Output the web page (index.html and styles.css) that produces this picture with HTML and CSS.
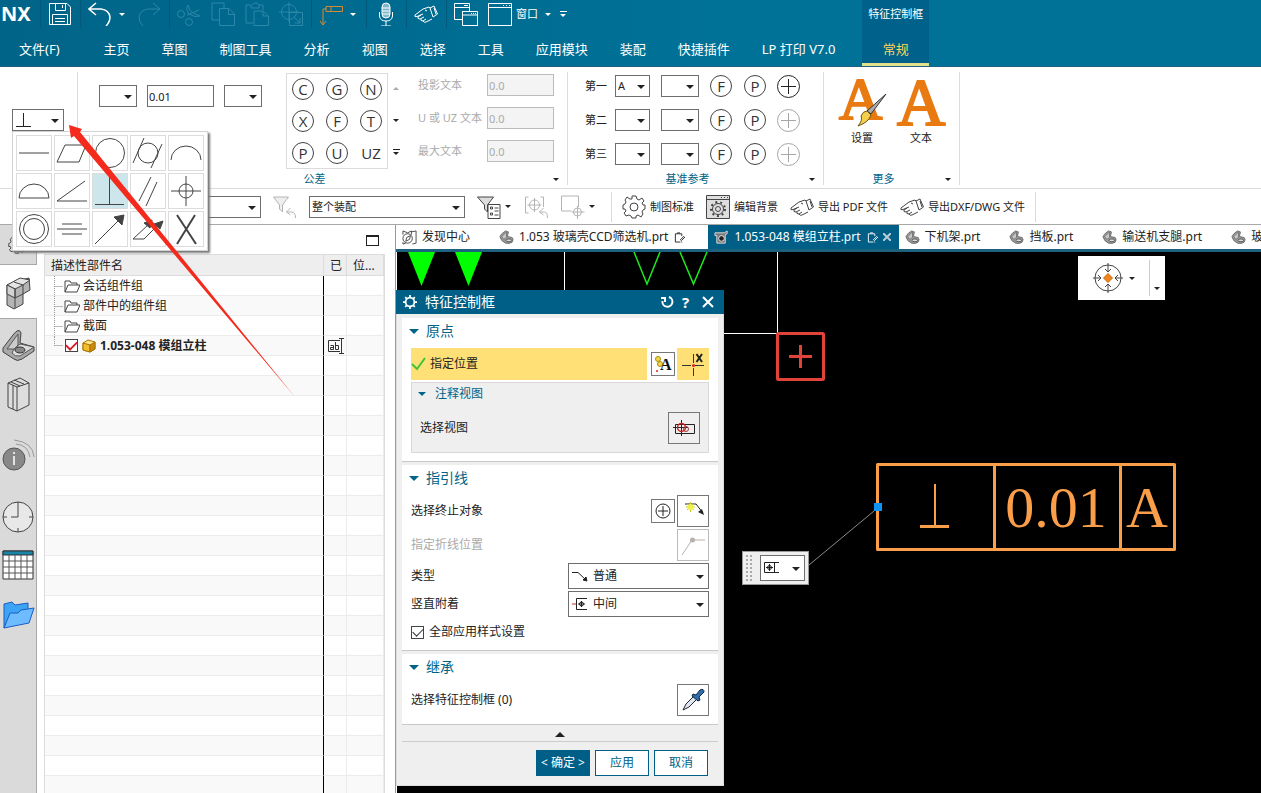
FILE: index.html
```html
<!DOCTYPE html>
<html lang="zh-CN">
<head>
<meta charset="utf-8">
<title>NX - 特征控制框</title>
<link rel="stylesheet" href="styles.css">
</head>
<body>
<svg class="defs" aria-hidden="true">
  <symbol id="hand" viewBox="0 0 24 24"><path d="M15 5 L9 7 L1 13 Q0 15.500 3 14.500 L9 12 M7 13 L4 15 Q3 17 6 17 L10 15 M7 17 Q6 19 9 19 L12 17 M9 19 Q10 21 12 20 L18 17 M11 8 L13 9 M15 5 L16 6 M16 6 L20 4 L23.500 12 L19 15 Z M20 6 L22 12"/></symbol>
  <symbol id="part" viewBox="0 0 16 16"><path fill="#9a9a9a" stroke="#6c6c6c" d="M1 7 Q3 3 7 1 L10 2 L9 7 L14 8 Q16 10 14 13 Q11 15 7 14 Q2 12 1 7 Z"/><path fill="#c8c8c8" stroke="#777" d="M3 7 L8 2 L8 8 L5 10 Z"/><ellipse cx="10.500" cy="11" rx="3" ry="1.500" fill="#ddd" stroke="#555"/></symbol>
  <symbol id="folder" viewBox="0 0 16 14"><path fill="#fff" stroke="#444" d="M1 13 V2 H6 L7 4 H13 V6 M1 13 L4 6 H16 L13 13 Z"/></symbol>
  <symbol id="note" viewBox="0 0 12 12"><path d="M7 11.500 H1.500 V2.500 H8.500 V5 M3.500 1.500 H6.500 M11 5 L7 9 L8 10 L12 6 M8 11.500 H9"/></symbol>
  <symbol id="gear" viewBox="0 0 24 24"><circle cx="12" cy="12" r="4"/><path d="M10 1 H14 L15 4 L17 5 L20 3 L22 6 L20 8 L21 10 L23 10 V14 L21 15 L20 17 L21 19 L19 22 L16 20 L14 21 L14 23 H10 L9 21 L7 20 L4 21 L2 18 L4 16 L3 14 L1 14 V10 L3 9 L4 7 L3 5 L5 2 L8 4 L10 4 Z"/></symbol>
</svg>

<header class="header">
  <div class="header-main">
    <div class="quick">
      <span class="brand">NX</span>
      <div class="qgroup"><button aria-label="保存"><svg viewBox="0 0 24 24"><path d="M1.500 1.500 H19 L22.500 5 V22.500 H1.500 Z M7.500 2 V8.500 H17.500 V2 M14.500 3 V6 M4.500 22 V12.500 H19.500 V22 M7 16.500 H17 M7 19.500 H17"/></svg></button></div>
      <div class="qgroup"><button aria-label="撤消"><svg viewBox="0 0 24 24"><path stroke-width="1.500" d="M8 1 L1 7 L8 13 M2 7 H13 Q21 8 22 15 Q22 20 18 24"/></svg></button><button class="caret" aria-label="撤消列表"></button><button class="dim" aria-label="重做"><svg viewBox="0 0 24 24"><path d="M16 1 L23 7 L16 13 M22 7 H11 Q3 8 2 15 Q2 20 6 24"/></svg></button></div>
      <div class="qgroup dim">
        <button aria-label="剪切"><svg viewBox="0 0 24 24"><path d="M22 8 L10 13 M11 3 Q12 9 16 11 L23 14 Q18 16 12 12 Q8 6 11 3"/><circle cx="4" cy="12" r="3.500"/><circle cx="12" cy="20" r="3.500"/></svg></button>
        <button aria-label="复制"><svg viewBox="0 0 24 24"><path d="M8 18 H1 V1 H13 V6 M8.500 6.500 H18 L23.500 12 V23.500 H8.500 Z M17.500 7 V12.500 H23"/></svg></button>
        <button aria-label="粘贴"><svg viewBox="0 0 24 24"><path d="M8 21 H1 V3 H6 V6 H14 V3 H18 V8 M7 3 L9 1 H12 L14 3 M9 9 H18 L23.500 14 V23.500 H9 Z M18 9 V14 H23"/></svg></button>
        <button aria-label="定位"><svg viewBox="0 0 24 24"><circle cx="10" cy="10" r="7.500"/><path d="M0 10 H20 M10 0 V20 M10.500 10.500 H23.500 V23.500 H10.500 Z M15 15 L21 21 M21 16 V21 H16"/></svg></button>
      </div>
      <div class="qgroup"><button class="orange" aria-label="注释"><svg viewBox="0 0 24 24"><path d="M7 4.500 H23.500 V9.500 H7 Z M12 5 V9 M7 7 H4 V23 M1 19 L4 23 L7 19"/></svg></button><button class="caret" aria-label="注释列表"></button></div>
      <div class="qgroup"><button aria-label="语音"><svg viewBox="0 0 24 24"><rect x="8" y="1" width="8" height="15" rx="4" fill="#7fb6ca"/><path d="M8 6 H16 M8 9 H16 M8 12 H16 M5.500 10 V14 Q6 19 12 19 Q18 19 18.500 14 V10 M12 19 V24 M7 24 H17"/></svg></button></div>
      <div class="qgroup"><button aria-label="触控"><svg><use href="#hand"/></svg></button></div>
      <div class="qgroup"><button aria-label="切换窗口"><svg viewBox="0 0 24 24"><path d="M8 17.500 H.5 V1.500 H15.500 V9 M.5 5.500 H15.500 M8.500 9.500 H23.500 V24 M8.500 9 V23.500 H23.500 M8.500 13 H23 M10 3.500 H14" /><path stroke-dasharray="1 1" d="M17 11.500 H23"/></svg></button><button class="labelled" aria-label="窗口"><svg viewBox="0 0 24 24"><path d="M.5 1.500 H23.500 V23.500 H.5 Z M.5 5.500 H23.500"/><path stroke-dasharray="1 2" d="M15 3.500 H23"/></svg>窗口</button><button class="caret" aria-label="窗口列表"></button><button class="caret bar" aria-label="自定义"></button></div>
    </div>
    <nav class="menu">
      <a href="#" class="file">文件(F)</a><a href="#">主页</a><a href="#">草图</a><a href="#">制图工具</a><a href="#">分析</a><a href="#">视图</a><a href="#">选择</a><a href="#">工具</a><a href="#">应用模块</a><a href="#">装配</a><a href="#">快捷插件</a><a href="#">LP 打印 V7.0</a>
    </nav>
  </div>
  <div class="context-tab"><span>特征控制框</span><a href="#">常规</a></div>
</header>

<section class="ribbon">
  <div class="group symbol-group">
    <span class="select symbol-select"><svg viewBox="0 0 16 16"><path d="M7.500 1 V15 M0 14.500 H15"/></svg><select aria-label="特性"><option></option></select></span>
    <div class="palette">
      <button aria-label="直线度"><svg viewBox="0 0 34 34"><path d="M2 17 H32"/></svg></button>
      <button aria-label="平面度"><svg viewBox="0 0 34 34"><path d="M2 26 L10 9 H31 L24 26 Z"/></svg></button>
      <button aria-label="圆度"><svg viewBox="0 0 34 34"><circle cx="17" cy="17" r="14.500"/></svg></button>
      <button aria-label="圆柱度"><svg viewBox="0 0 34 34"><circle cx="17" cy="17" r="10"/><path d="M2 27 L13 2 M20 32 L31 8"/></svg></button>
      <button aria-label="线轮廓度"><svg viewBox="0 0 34 34"><path d="M2 24 A15 14 0 0 1 32 24"/></svg></button>
      <button aria-label="面轮廓度"><svg viewBox="0 0 34 34"><path d="M2 24 A15 14 0 0 1 32 24 Z"/></svg></button>
      <button aria-label="倾斜度"><svg viewBox="0 0 34 34"><path d="M30 7 L2 27 H32"/></svg></button>
      <button class="active" aria-label="垂直度"><svg viewBox="0 0 34 34"><path d="M16.500 3 V31 M2 30.500 H31"/></svg></button>
      <button aria-label="平行度"><svg viewBox="0 0 34 34"><path d="M8 27 L20 3 M15 32 L26 8"/></svg></button>
      <button aria-label="位置度"><svg viewBox="0 0 34 34"><circle cx="17" cy="17" r="7"/><path d="M2 17 H32 M17 2 V32"/></svg></button>
      <button aria-label="同轴度"><svg viewBox="0 0 34 34"><circle cx="17" cy="17" r="14.500"/><circle cx="17" cy="17" r="10.500"/></svg></button>
      <button aria-label="对称度"><svg viewBox="0 0 34 34"><path d="M7 12 H27 M2 17 H32 M7 22 H27"/></svg></button>
      <button aria-label="圆跳动"><svg viewBox="0 0 34 34"><path d="M2 32 L26 8"/><path fill="#444" d="M31 3 L29 13 L21 5 Z"/></svg></button>
      <button aria-label="全跳动"><svg viewBox="0 0 34 34"><path d="M18 12 L2 27 H13 L27 13"/><path fill="#444" d="M21 8 L19 16 L13 11 Z M32 9 L29 17 L23 12 Z"/></svg></button>
      <button aria-label="无"><svg viewBox="0 0 34 34"><path stroke-width="2" d="M8 3 L27 32 M26 3 L8 32"/></svg></button>
    </div>
  </div>
  <div class="group tolerance">
    <div class="group-body">
      <div class="tol-values"><span class="select"><select aria-label="形状"><option></option></select></span><input class="box" aria-label="公差值" value="0.01"><span class="select"><select aria-label="修饰符"><option></option></select></span></div>
      <div class="letters">
        <button>C</button><button>G</button><button>N</button><button>X</button><button>F</button><button>T</button><button>P</button><button>U</button><button class="plain">UZ</button>
      </div>
      <div class="scroller"><button class="caret up" aria-label="向上"></button><button class="caret" aria-label="向下"></button><button class="caret bar" aria-label="更多符号"></button></div>
      <div class="text-fields">
        <label for="t1">投影文本</label><input id="t1" class="box" value="0.0" disabled>
        <label for="t2">U 或 UZ 文本</label><input id="t2" class="box" value="0.0" disabled>
        <label for="t3">最大文本</label><input id="t3" class="box" value="0.0" disabled>
      </div>
    </div>
    <div class="group-title"><span>公差</span><button class="caret" aria-label="公差选项"></button></div>
  </div>
  <div class="group datum">
    <div class="group-body datum-rows">
      <div class="datum-row"><label for="d1">第一</label><span class="select narrow"><select id="d1"><option>A</option></select></span><span class="select"><select aria-label="第一修饰符"><option></option></select></span><button class="ring">F</button><button class="ring">P</button><button class="plus" aria-label="添加第一"></button></div>
      <div class="datum-row"><label for="d2">第二</label><span class="select narrow"><select id="d2"><option></option></select></span><span class="select"><select aria-label="第二修饰符"><option></option></select></span><button class="ring">F</button><button class="ring">P</button><button class="plus" aria-label="添加第二" disabled></button></div>
      <div class="datum-row"><label for="d3">第三</label><span class="select narrow"><select id="d3"><option></option></select></span><span class="select"><select aria-label="第三修饰符"><option></option></select></span><button class="ring">F</button><button class="ring">P</button><button class="plus" aria-label="添加第三" disabled></button></div>
    </div>
    <div class="group-title"><span>基准参考</span><button class="caret" aria-label="基准选项"></button></div>
  </div>
  <div class="group more">
    <div class="group-body big-buttons">
      <button><svg viewBox="0 0 52 54"><text class="big-a" x="3" y="43" font-size="60">A</text><path fill="#aaa" stroke="#333" d="M50 18 L35 38 L31 35 Z"/><path fill="#f4cf4b" stroke="#6b5418" d="M31 35 L35 39 Q33 46 22 50 Q27 44 25 40 Q27 35 31 35"/></svg>设置</button>
      <button><svg viewBox="0 0 52 54"><text class="big-a" x="2" y="49" font-size="67">A</text></svg>文本</button>
    </div>
    <div class="group-title"><span>更多</span><button class="caret" aria-label="更多选项"></button></div>
  </div>
</section>

<section class="toolbar">
  <span class="select filter-select"><select aria-label="选择过滤器"><option></option></select></span>
  <button class="tool faded" aria-label="重置过滤器"><svg viewBox="0 0 24 24"><path fill="#eee" d="M1 2 H16 L10 10 V17 L7 14 V10 Z"/><path d="M18 13 L14 17 L18 20 M14 17 H19 Q23 17 23 23"/></svg></button>
  <span class="select scope-select"><select aria-label="选择范围"><option>整个装配</option></select></span>
  <button class="tool" aria-label="过滤器"><svg viewBox="0 0 24 24"><path fill="#ddd" d="M1 2 H17 L11 10 V17 L8 14 V10 Z"/><path fill="#fff" d="M11.500 9.500 H23.500 V23.500 H11.500 Z M14 12 H16 V14 H14 Z M14 18 H16 V20 H14 Z M18 13 H22 M18 16 H22 M18 20 H22"/></svg></button><button class="caret" aria-label="过滤器列表"></button>
  <button class="tool faded" aria-label="捕捉"><svg viewBox="0 0 24 24"><circle cx="10" cy="10" r="5"/><path d="M4 2 H1 V18 H4 M16 2 H19 V12 M3 10 H17 M10 3 V17 M19 13 L15 17 L19 20 M15 17 H20 Q23 17 23 23"/></svg></button>
  <button class="tool faded" aria-label="框选"><svg viewBox="0 0 24 24"><path d="M1 1 H18 V12 M1 1 V16 H11 M11 17 H24 M17 11 V24"/><circle cx="17" cy="17" r="4"/></svg></button><button class="caret" aria-label="框选列表"></button>
  <div class="toolbar-end">
    <button class="action"><svg><use href="#gear"/></svg>制图标准</button>
    <button class="action"><svg viewBox="0 0 24 24"><path fill="#dedede" d="M.5 .5 H23.500 V23.500 H.5 Z M.5 4.500 H23.500"/><path stroke-dasharray="1 2" d="M15 2.500 H23"/><circle cx="12" cy="14" r="2.500"/><circle cx="12" cy="14" r="5.500"/><circle cx="12" cy="14" r="7" stroke-width="2" stroke-dasharray="2 3"/></svg>编辑背景</button>
    <button class="action"><svg><use href="#hand"/></svg>导出 PDF 文件</button>
    <button class="action"><svg><use href="#hand"/></svg>导出DXF/DWG 文件</button>
  </div>
</section>

<main class="workspace">
  <aside class="resource-bar">
    <button class="settings" aria-label="设置"><svg viewBox="0 0 24 24"><use href="#gear"/></svg></button>
    <button class="current" aria-label="装配导航器"><svg viewBox="0 0 36 36"><path fill="#b4b4b4" stroke="#444" d="M7 11 L17 7 L29 4 L30 16 L23 20 V30 L14 35 L7 31 Z"/><path fill="#e4e4e4" stroke="#444" d="M7 11 L20 4 L30 6 L23 11 L15 15 Z"/><path fill="#d2d2d2" stroke="#444" d="M7 11 L15 15 V24 L7 20 Z"/><path fill="none" stroke="#444" d="M15 15 V34 M15 24 L23 20 V11 M14 8 L23 11"/></svg></button>
    <button aria-label="约束导航器"><svg viewBox="0 0 36 36"><path fill="#a8a8a8" stroke="#444" d="M3 22 L13 9 Q19 1 21 7 L20 17 L34 21 V25 L22 33 Q17 36 14 33 L3 26 Z"/><path fill="#ccc" stroke="#555" d="M7 23 L18 8 L18 19 L14 23 Z"/><path fill="#ddd" stroke="#555" d="M14 23 L20 18 L34 21 L20 30 Q15 31 12 27 Z"/><ellipse cx="20" cy="24" rx="5" ry="3" fill="#888" stroke="#333"/></svg></button>
    <button aria-label="重用库"><svg viewBox="0 0 36 36"><path fill="#ddd" stroke="#444" d="M8 7 L20 2 L29 7 V29 L17 35 L8 31 Z M8 7 L17 11 L29 7 M17 11 V35 M13 9 V33 M11 6 L20 10 M14 4 L24 8"/></svg></button>
    <button class="info" aria-label="信息"><svg viewBox="0 0 36 36"><circle cx="14" cy="20" r="11" fill="#888" stroke="#555"/><path fill="none" stroke="#999" d="M16 5 Q28 6 30 18 M14 1 Q33 3 34 18"/><path stroke="#fff" stroke-width="1.500" d="M14 17 V26 M14 13 V15"/></svg></button>
    <button class="history" aria-label="历史"><svg viewBox="0 0 36 36"><circle cx="18" cy="18" r="15" fill="#e8e8e8" stroke="#444"/><path fill="none" stroke="#444" d="M18 3 V18 H11 M3 18 H7 M29 18 H33 M18 29 V33"/></svg></button>
    <button aria-label="工作表"><svg viewBox="0 0 36 36"><path fill="#fff" stroke="#333" d="M3 4 H33 V32 H3 Z"/><path fill="#1884a8" stroke="#333" d="M3 4 H33 V8 H3 Z"/><path stroke="#555" d="M3 14 H33 M3 20 H33 M3 26 H33 M9 8 V32 M15 8 V32 M21 8 V32 M27 8 V32"/></svg></button>
    <button aria-label="文件夹"><svg viewBox="0 0 36 36"><path fill="#3ba4f4" stroke="#1c5dc4" d="M4 7 L12 5 L15 8 L28 6 V15 L10 18 L4 31 Z"/><path fill="#6cbcff" stroke="#1c5dc4" d="M4 31 L10 16 L18 16 L21 13 L34 11 L29 26 Z"/></svg></button>
  </aside>

  <section class="navigator">
    <div class="nav-head"><button class="maximize" aria-label="最大化"></button></div>
    <table class="tree">
      <colgroup><col><col class="c2"><col class="c3"></colgroup>
      <thead><tr><th>描述性部件名</th><th>已</th><th>位...</th></tr></thead>
      <tbody>
        <tr class="node"><td><span><svg><use href="#folder"/></svg>会话组件组</span></td><td></td><td></td></tr>
        <tr class="node"><td><span><svg><use href="#folder"/></svg>部件中的组件组</span></td><td></td><td></td></tr>
        <tr class="node"><td><span><svg><use href="#folder"/></svg>截面</span></td><td></td><td></td></tr>
        <tr class="node last"><td><span><input id="asm" type="checkbox" class="red-check" checked><svg viewBox="0 0 14 14"><path fill="#ffe48a" stroke="#a87400" d="M1 4 L6 1 L13 3 V10 L8 13 L1 11 Z"/><path fill="#f4bd30" d="M1 4 L8 6 V13 L1 11 Z" stroke="#a87400"/><path fill="#c98a10" stroke="#a87400" d="M8 6 L13 3 V10 L8 13 Z"/></svg><label for="asm">1.053-048 模组立柱</label></span></td><td><svg class="ab" viewBox="0 0 16 16"><path d="M12 2.500 H.5 V13.500 H12 M13.500 1 V15 M11 .5 H16 M11 15.500 H16 M2.500 7.500 H5.500 V11.500 H2.500 V9.500 H5 M7.500 4 V11.500 H10.500 V7.500 H8"/></svg></td><td></td></tr>
        <tr><td></td><td></td><td></td></tr><tr><td></td><td></td><td></td></tr><tr><td></td><td></td><td></td></tr><tr><td></td><td></td><td></td></tr>
        <tr><td></td><td></td><td></td></tr><tr><td></td><td></td><td></td></tr><tr><td></td><td></td><td></td></tr><tr><td></td><td></td><td></td></tr>
        <tr><td></td><td></td><td></td></tr><tr><td></td><td></td><td></td></tr><tr><td></td><td></td><td></td></tr><tr><td></td><td></td><td></td></tr>
        <tr><td></td><td></td><td></td></tr><tr><td></td><td></td><td></td></tr><tr><td></td><td></td><td></td></tr><tr><td></td><td></td><td></td></tr>
        <tr><td></td><td></td><td></td></tr><tr><td></td><td></td><td></td></tr><tr><td></td><td></td><td></td></tr><tr><td></td><td></td><td></td></tr>
        <tr><td></td><td></td><td></td></tr><tr><td></td><td></td><td></td></tr>
      </tbody>
    </table>
  </section>

  <section class="document">
    <nav class="tabs">
      <a href="#"><svg viewBox="0 0 16 16"><circle cx="6" cy="9" r="5" fill="none" stroke="#444"/><path fill="none" stroke="#444" d="M1 5 V1 L6 3 L10 1 V5 M10 2 L15 1 V14 L11 15 M4 12 L5 8 L9 6 L8 10 Z M1 13 V15 L4 14"/></svg>发现中心</a>
      <a href="#"><svg><use href="#part"/></svg>1.053 玻璃壳CCD筛选机.prt<svg class="note"><use href="#note"/></svg></a>
      <a href="#" class="active"><svg viewBox="0 0 16 16"><path fill="#777" stroke="#ddd" d="M1 3 H11 L14 1 V4 L12 5 V14 H3 V6 H1 Z"/><circle cx="8" cy="9" r="3" fill="#222" stroke="#eee"/></svg>1.053-048 模组立柱.prt<svg class="note"><use href="#note"/></svg><svg class="close" viewBox="0 0 8 8"><path d="M0 0 L8 8 M8 0 L0 8"/></svg></a>
      <a href="#"><svg><use href="#part"/></svg>下机架.prt</a>
      <a href="#"><svg><use href="#part"/></svg>挡板.prt</a>
      <a href="#"><svg><use href="#part"/></svg>输送机支腿.prt</a>
      <a href="#"><svg><use href="#part"/></svg>玻</a>
    </nav>
    <div class="canvas">
      <svg class="drawing">
        <g transform="translate(-397 -252)" fill="none">
          <path fill="#0f0" stroke="none" d="M408 252 H435 L421.500 286 Z M455 252 H482 L468.500 286 Z"/>
          <path stroke="#1ee81e" stroke-width="1.500" d="M634 252 L647 284 L660 252 M680 252 L693.500 284 L707 252"/>
          <path stroke="#fff" d="M564.500 252 V290 M777.500 252 V333 M723 333.500 H777"/>
          <rect x="777.500" y="333.500" width="46" height="46" rx="1" stroke="#e04338" stroke-width="3"/>
          <path stroke="#e04338" stroke-width="3" d="M789 356.500 H812 M800.500 345 V368"/>
          <path stroke="#fb9e49" stroke-width="3" stroke-linejoin="round" d="M877.500 464.500 H1174.500 V549.500 H877.500 Z M994.500 464 V549 M1120.500 464 V549 M920 526.500 H949"/>
          <path stroke="#fb9e49" stroke-width="2" d="M935 484 V526"/>
          <text class="cad-text" x="1056" y="527" text-anchor="middle">0.01</text>
          <text class="cad-text" x="1147" y="527" text-anchor="middle">A</text>
          <path stroke="#8d8a80" d="M809 565 L874 511"/>
          <rect x="874" y="503" width="8" height="8" fill="#0b94f5" stroke="none"/>
        </g>
      </svg>

      <div class="view-tools"><button aria-label="定向视图"><svg viewBox="0 0 30 30"><circle cx="15" cy="15" r="13"/><path d="M15 0 V9 M12 6 L15 9 L18 6 M15 30 V21 M12 24 L15 21 L18 24 M0 15 H8 M5 12 L8 15 L5 18 M30 15 H22 M25 12 L22 15 L25 18"/><path fill="#f0851c" stroke="#c86a10" d="M15 10.500 L19.500 15 L15 19.500 L10.500 15 Z"/></svg></button><button class="caret" aria-label="视图列表"></button><span class="view-more"><button class="caret" aria-label="视图选项"></button></span></div>

      <div class="leader-tools"><span class="grip"></span><span class="select"><svg viewBox="0 0 16 16"><path d="M15 2.500 H.5 V12.500 H15 M10.500 3 V12 M2 7.500 H9 M5.500 4 V11"/><circle cx="5.500" cy="7.500" r="2"/></svg><select aria-label="附着"><option></option></select></span></div>

      <form class="dialog" onsubmit="return false">
        <div class="dialog-title"><svg viewBox="0 0 16 16"><circle cx="8" cy="8" r="5"/><path d="M8 0 V3 M8 13 V16 M0 8 H3 M13 8 H16 M2.500 2.500 L4.500 4.500 M11.500 11.500 L13.500 13.500 M13.500 2.500 L11.500 4.500 M4.500 11.500 L2.500 13.500"/></svg><h2>特征控制框</h2><button type="button" aria-label="重置"><svg viewBox="0 0 14 14"><path d="M1 3 H5 V7 M9 2 A5 5 0 1 1 2.500 6"/></svg></button><button type="button" aria-label="帮助">?</button><button type="button" aria-label="关闭"><svg viewBox="0 0 14 14"><path d="M2 2 L12 12 M12 2 L2 12"/></svg></button></div>
        <section class="panel">
          <h3>原点</h3>
          <div class="pick-row">
            <div class="pick"><svg viewBox="0 0 16 16"><path d="M1 8 L6 13 L14 2"/></svg>指定位置</div>
            <button type="button" class="small" aria-label="关联文字"><svg viewBox="0 0 22 22"><circle cx="6" cy="6" r="2.500" fill="#f4d848" stroke="#a98b0c"/><circle cx="8" cy="11" r="2.500" fill="#f4d848" stroke="#a98b0c"/><circle cx="5" cy="18" r="1" fill="#d22"/><text x="8" y="17" class="icon-a">A</text></svg></button>
            <button type="button" class="square hot" aria-label="点构造器"><svg viewBox="0 0 30 30"><path d="M4 16.500 H13 M17 16.500 H26 M15.500 5 V14 M15.500 19 V27" stroke="#333"/><path d="M18.500 5 L24 13 M24 5 L18.500 13" stroke="#222" stroke-width="2"/><circle cx="15.500" cy="16.500" r="1.500" fill="#d22"/></svg></button>
          </div>
          <div class="subpanel">
            <h4>注释视图</h4>
            <div class="row"><span>选择视图</span><button type="button" class="square grey" aria-label="选择视图"><svg viewBox="0 0 30 30"><path fill="none" stroke="#222" d="M6.500 11.500 H25.500 V20.500 H6.500 Z M4 14.500 H19 M12.500 7 V23"/><circle cx="12.500" cy="14.500" r="4" fill="none" stroke="#c22" stroke-width="1.500"/><circle cx="17" cy="16" r="2.500" fill="none" stroke="#a33"/></svg></button></div>
          </div>
        </section>
        <section class="panel leader">
          <h3>指引线</h3>
          <div class="row"><span>选择终止对象</span><button type="button" class="small" aria-label="添加对象"><svg viewBox="0 0 22 22"><path fill="none" stroke="#222" d="M6 11 H16 M11 6 V16"/><circle cx="11" cy="11" r="7" fill="none" stroke="#222"/></svg></button><button type="button" class="square" aria-label="终止对象"><svg viewBox="0 0 30 30"><path fill="none" stroke="#222" d="M7 8 H18 L25 17"/><path fill="#222" d="M26 19 L20 16 L24 13 Z"/><path stroke="#c9c72d" d="M8 11 H17 M12.500 6 V16 M9 8 L16 14 M16 8 L9 14"/><circle cx="12.500" cy="11" r="3" fill="#eef04a"/></svg></button></div>
          <div class="row disabled"><span>指定折线位置</span><button type="button" class="square" disabled aria-label="折线位置"><svg viewBox="0 0 30 30"><path fill="none" stroke="#b8b0ac" d="M4 25 L14 10 H27"/><circle cx="14.500" cy="10" r="2.500" fill="#b8b0ac"/></svg></button></div>
          <div class="row field"><label for="kind">类型</label><span class="select"><svg viewBox="0 0 16 16"><path d="M0 4.500 H6 L14 12"/><path fill="#222" d="M15 13 L11 12 L14 9 Z"/></svg><select id="kind"><option>普通</option></select></span></div>
          <div class="row field"><label for="attach">竖直附着</label><span class="select"><svg viewBox="0 0 16 16"><path stroke="#b33" d="M0 8 H4"/><path d="M15 2.500 H4.500 V13.500 H15 M6 8 H13 M9.500 5 V11"/><circle cx="9.500" cy="8" r="2"/></svg><select id="attach"><option>中间</option></select></span></div>
          <div class="check-row"><input type="checkbox" id="style" checked><label for="style">全部应用样式设置</label></div>
        </section>
        <section class="panel inherit">
          <h3>继承</h3>
          <div class="row"><span>选择特征控制框 (0)</span><button type="button" class="square" aria-label="继承控制框"><svg viewBox="0 0 30 30"><path fill="#dfe6f4" stroke="#222" d="M5 25 L8 19 L16 11 L19 14 L11 22 Z"/><path fill="#2d6db0" stroke="#14263c" d="M15 9 L18 10 L22 5 Q26 3 26 7 L21 12 L22 15 L20 16 L14 11 Z"/></svg></button></div>
        </section>
        <button type="button" class="collapse" aria-label="收起"></button>
        <div class="dialog-actions"><button class="primary">&lt; 确定 &gt;</button><button type="button">应用</button><button type="button">取消</button></div>
      </form>
    </div>
  </section>
</main>

<svg class="callout" viewBox="0 0 300 400" aria-hidden="true"><path fill="#f42a1c" d="M69 125 L82 129 L80 132 L295 397 L74 136 L71 138 Z"/></svg>
</body>
</html>
```
FILE: styles.css
```css
* { box-sizing: border-box; }
body {
  margin: 0;
  height: 100vh;
  display: flex;
  flex-direction: column;
  overflow: hidden;
  background: #fff;
  color: #222;
  font: 12px/16px "Noto Sans", "Noto Sans CJK SC", sans-serif;
}
button, input, select {
  font: inherit;
  color: inherit;
  margin: 0;
  padding: 0;
  border: 0;
  border-radius: 0;
  background: none;
}
a { color: inherit; text-decoration: none; }
svg { display: block; flex: none; fill: none; stroke: currentColor; }
h2, h3, h4 { margin: 0; font-weight: 400; }
.defs { position: absolute; width: 0; height: 0; }

.caret { width: 10px; height: 16px; flex: none; display: flex; flex-direction: column; align-items: center; justify-content: center; gap: 2px; }
.caret::after { content: ""; border: 3px solid transparent; border-top-color: currentColor; border-bottom: 0; }
.caret.bar::before { content: ""; width: 7px; height: 1px; background: currentColor; }
.caret.up::after { border: 3px solid transparent; border-bottom-color: #aaa; border-top: 0; }

.select { position: relative; display: flex; flex: none; width: 38px; height: 22px; }
.select select { appearance: none; width: 100%; height: 100%; padding: 0 0 0 2px; border: 1px solid #6e6e6e; background: #fff; }
.select::after { content: ""; position: absolute; right: 5px; top: 50%; margin-top: -1px; border: 4px solid transparent; border-top-color: #222; border-bottom: 0; pointer-events: none; }
.select svg { position: absolute; left: 4px; top: 50%; width: 16px; height: 16px; margin-top: -8px; pointer-events: none; }
.box { width: 67px; height: 22px; padding: 0 1px; border: 1px solid #6e6e6e; background: #fff; font-size: 11px; }
.box:disabled { border-color: #bcbcbc; background: #f4f4f4; color: #aaa; }

.header { flex: none; display: flex; height: 67px; color: #fff; background: linear-gradient(90deg, #006488, #007298 60%); border-bottom: 1px solid #1e5f80; }
.quick { display: flex; align-items: center; height: 28px; }
.brand { width: 40px; padding-left: 1px; font: 700 20px/28px "Noto Sans", sans-serif; }
.qgroup { display: flex; align-items: center; gap: 10px; height: 28px; padding: 0 8px 0 7px; border-left: 1px solid #00587a; }
.qgroup svg { width: 24px; height: 24px; }
.qgroup .caret { margin-left: -5px; }
.qgroup .labelled { display: flex; align-items: center; gap: 4px; font-size: 11px; }
.qgroup .orange { color: #d98a30; }
.dim { color: #2c87a8; }
.menu { display: flex; height: 42px; align-items: center; font-size: 13px; line-height: 20px; }
.menu a { padding: 0 16px; }
.menu .file { padding: 0 28px 0 19px; }
.context-tab { display: flex; flex-direction: column; align-items: center; margin-left: 11px; padding: 0 6px; background: #00628a; border-bottom: 3px solid #e2e08a; font-size: 11px; }
.context-tab span { line-height: 28px; }
.context-tab a { color: #ffd45e; font-size: 13px; line-height: 42px; }

.ribbon { flex: none; display: flex; height: 122px; padding: 5px 0 3px; border-bottom: 1px solid #dcdcdc; font-size: 11px; }
.group { display: flex; flex-direction: column; justify-content: space-between; border-right: 1px solid #dcdcdc; }
.group-body { display: flex; }
.group-title { display: flex; align-items: center; padding-right: 6px; color: #006487; line-height: 12px; }
.group-title span { flex: 1; text-align: center; }
.group-title .caret { height: 12px; color: #222; }
.symbol-group { position: relative; width: 78px; padding: 37px 0 0 12px; justify-content: flex-start; }
.symbol-select { width: 52px; }
.palette { position: absolute; z-index: 5; left: 12px; top: 59px; display: grid; grid-template-columns: repeat(5, 36px); gap: 2px; padding: 3px; background: #fff; border: 1px solid #d2d2d2; box-shadow: 2px 2px 2px #777; }
.palette button { height: 36px; border: 1px solid #dcdcdc; color: #444; }
.palette .active { background: #cde6ec; }
.tolerance .group-body { padding: 1px 13px 0 21px; }
.tol-values { display: flex; gap: 10px; padding-top: 12px; }
.letters { display: grid; grid-template-columns: repeat(3, 34px); grid-auto-rows: 32px; place-items: center; place-content: center; width: 102px; height: 96px; margin-left: 24px; border: 1px solid #dcdcdc; }
.letters button, .ring { width: 22px; height: 22px; border: 1px solid #444; border-radius: 50%; color: #333; font: 400 15px/20px "Open Sans", sans-serif; }
.letters .plain { border: 0; }
.scroller { display: flex; flex-direction: column; gap: 16px; padding: 7px 0 0 3px; }
.text-fields { display: grid; grid-template-columns: 69px 67px; row-gap: 11px; margin-left: 17px; padding-top: 1px; align-content: start; align-items: center; color: #aaa; white-space: nowrap; }
.datum-rows { flex-direction: column; gap: 12px; padding: 3px 23px 0 17px; }
.datum-row { display: flex; align-items: center; gap: 11px; }
.datum-row label { width: 19px; white-space: nowrap; }
.datum-row .narrow { width: 35px; }
.datum-row .ring { margin-right: 1px; }
.datum-row .ring + .plus { margin-left: -1px; }
.plus { width: 23px; height: 23px; margin: -1px 0; border: 1px solid #222; border-radius: 50%; background: linear-gradient(#222, #222) center / 15px 1px no-repeat, linear-gradient(#222, #222) center / 1px 15px no-repeat; }
.plus:disabled { opacity: 0.4; }
.big-buttons { gap: 7px; padding: 4px 12px 0 12px; }
.big-buttons button { display: flex; flex-direction: column; align-items: center; }
.big-buttons svg { width: 52px; height: 54px; }
.big-a { font-family: "Liberation Serif", serif; font-weight: 400; fill: #e97a12; stroke: #e97a12; stroke-width: 2px; }

.toolbar { flex: none; display: flex; align-items: center; height: 36px; border-bottom: 1px solid #a8a8a8; font-size: 11px; padding-left: 160px; }
.filter-select { width: 101px; }
.scope-select { width: 156px; margin-left: 12px; }
.tool { margin-left: 11px; color: #444; }
.tool svg { width: 25px; height: 24px; }
.toolbar > .caret { margin-left: 2px; }
.faded { color: #b4b4b4; }
.toolbar-end { display: flex; gap: 12px; margin-left: 14px; padding: 3px 10px; border: solid #dcdcdc; border-width: 0 1px; }
.action { display: flex; align-items: center; gap: 4px; white-space: nowrap; }
.action svg { width: 24px; height: 24px; color: #444; }

.workspace { flex: 1; min-height: 0; display: flex; }
.resource-bar { flex: none; display: flex; flex-direction: column; width: 37px; background: #dadada; border-right: 1px solid #a8a8a8; }
.resource-bar button { height: 50px; flex: none; }
.resource-bar svg { width: 36px; height: 36px; }
.resource-bar .settings { height: 40px; padding: 4px 8px; border-bottom: 1px solid #a8a8a8; }
.resource-bar .settings svg { width: 18px; height: 18px; }
.resource-bar .current { width: 37px; height: 54px; background: #fff; border-bottom: 1px solid #a8a8a8; }
.resource-bar .info { height: 75px; }
.resource-bar .history { height: 46px; }

.navigator { flex: none; width: 359px; padding-left: 7px; border-right: 1px solid #999; overflow: hidden; }
.nav-head { display: flex; justify-content: flex-end; align-items: center; height: 29px; padding: 2px 16px 0 0; }
.maximize { width: 13px; height: 11px; border: 1px solid #222; border-top-width: 2px; }
.tree { width: 341px; border-collapse: separate; border-spacing: 0; table-layout: fixed; border: solid #dcdcdc; border-width: 1px 1px 0; }
.tree .c2 { width: 23px; }
.tree .c3 { width: 37px; }
.tree th { height: 21px; padding: 2px 0 0 6px; line-height: 18px; background: #eee; border: solid #dcdcdc; border-width: 0 1px 1px 0; text-align: left; font-weight: 400; white-space: nowrap; }
.tree td { height: 20px; padding: 0; border: solid #ececec; border-width: 0 1px 1px 0; white-space: nowrap; }
.tree td:first-child { border-right-color: #000; }
.tree tbody tr:nth-child(even) { background: #f9f9f9; }
.node td:first-child { padding-left: 9px; }
.node span { display: flex; align-items: center; gap: 3px; height: 19px; padding-left: 9px; border-left: 1px dotted #999; background: linear-gradient(90deg, #bbb, #bbb) 0 10px / 8px 1px no-repeat; }
.node span svg { width: 16px; height: 14px; }
.node.last span { height: 10px; margin-bottom: 9px; padding-left: 10px; background-position: 0 bottom; font-weight: 700; }
.node.last span > * { margin-top: 9px; }
.ab { width: 16px; height: 16px; margin-left: 4px; color: #333; }
input[type="checkbox"] { appearance: none; width: 13px; height: 13px; border: 1px solid #444; background: #fff; display: grid; place-items: center; }
input[type="checkbox"]:checked::before { content: ""; width: 9px; height: 5px; border: solid #333; border-width: 0 0 1px 1px; transform: rotate(-45deg); margin-bottom: 3px; }
input.red-check:checked::before { border-color: #d8202e; border-width: 0 0 2px 2px; }

.document { flex: 1; min-width: 0; display: flex; flex-direction: column; }
.tabs { flex: none; display: flex; height: 27px; overflow: hidden; border-bottom: 3px solid #1e617f; }
.tabs a { display: flex; flex: none; align-items: center; gap: 5px; padding: 0 23px 0 6px; white-space: nowrap; }
.tabs svg { width: 15px; height: 15px; }
.tabs .active { padding-right: 8px; background: #005f87; color: #fff; }
.tabs .note { width: 11px; height: 12px; margin-left: 1px; }
.tabs .close { width: 8px; height: 8px; stroke-width: 2; color: #b9ccd5; }
.canvas { position: relative; flex: 1; background: #000; margin-left: 1px; }
.drawing { position: absolute; inset: 0; width: 100%; height: 100%; }
.cad-text { font: 58px "Liberation Serif", serif; fill: #fb9e49; stroke: none; }

.view-tools { position: absolute; left: 681px; top: 4px; display: flex; align-items: center; height: 44px; padding: 0 0 0 15px; background: #fff; gap: 4px; }
.view-tools svg { width: 30px; height: 30px; color: #444; }
.view-more { display: flex; align-items: flex-end; height: 36px; margin-left: 8px; padding: 0 3px 0 2px; border-left: 1px solid #ccc; }
.leader-tools { position: absolute; left: 345px; top: 299px; display: flex; align-items: center; justify-content: space-between; width: 67px; height: 34px; padding: 0 3px 0 2px; background: #efefef; border: 1px solid #999; }
.leader-tools .select { width: 45px; height: 26px; }
.grip { width: 8px; height: 28px; background: radial-gradient(#aaa 1px, transparent 1px) 0 0 / 4px 4px; }

.dialog { position: absolute; left: -1px; top: 38px; width: 328px; padding-bottom: 9px; background: #efefef; border: 1px solid #ddd; border-top: 0; }
.dialog-title { display: flex; align-items: center; height: 24px; margin: 0 -1px 4px; padding: 0 3px 0 7px; color: #fff; background: #005f87; }
.dialog-title > svg { width: 14px; height: 14px; stroke-width: 2; }
.dialog-title h2 { flex: 1; margin-left: 8px; font-size: 14px; }
.dialog-title button { width: 19px; display: grid; place-items: center; font-weight: 700; font-size: 15px; }
.dialog-title button + button + button { width: 26px; }
.dialog-title button svg { width: 14px; height: 14px; stroke-width: 2; }
.panel { margin: 0 5px 3px; padding: 0 9px 8px; background: #fff; border-bottom: 1px solid #c8c8c8; }
.panel h3, .panel h4 { display: flex; align-items: center; color: #006487; }
.panel h3 { gap: 7px; height: 26px; margin-left: -2px; font-size: 14px; line-height: 20px; }
.panel h3::before, .panel h4::before { content: ""; border: 5px solid transparent; border-top-color: currentColor; border-bottom: 0; }
.panel h4::before { border-width: 4px; border-bottom: 0; }
.panel h4 { gap: 9px; height: 22px; margin-left: -2px; }
.pick-row { display: flex; align-items: center; gap: 2px; margin: 4px 0 2px; }
.pick { flex: 1; display: flex; align-items: center; gap: 3px; height: 32px; margin-right: 2px; background: #ffe077; }
.pick svg { width: 16px; height: 16px; stroke: #3fc437; stroke-width: 2; }
.small, .square { flex: none; display: grid; place-items: center; border: 1px solid #777; background: #fff; }
.small { width: 24px; height: 24px; }
.small svg { width: 22px; height: 22px; }
.square { width: 32px; height: 32px; }
.square svg { width: 30px; height: 30px; }
.square:disabled { border-color: #bbb; }
.square.hot { border-color: #ffe077; background: #ffe077; }
.square.grey { background: #efefef; }
.small svg, .square svg { stroke: none; }
.icon-a { font: 700 16px "Liberation Serif", serif; fill: #111; }
.subpanel { padding: 0 8px 8px; border: 1px solid #d8d8d8; background: #efefef; }
.subpanel .row { padding-top: 7px; }
.row { display: flex; align-items: center; gap: 2px; }
.row > :first-child { flex: 1; }
.row.disabled { color: #aaa; margin: 2px 0; }
.leader h3 { margin-bottom: 4px; }
.field { margin-bottom: 2px; }
.field .select { width: 141px; height: 26px; }
.field .select select { padding-left: 24px; }
.check-row { display: flex; align-items: center; gap: 5px; height: 26px; }
.leader { padding-bottom: 5px; }
.inherit h3 { margin-bottom: 4px; }
.collapse { display: flex; align-items: center; justify-content: center; width: 316px; height: 14px; margin-left: 5px; border-bottom: 1px solid #ccc; }
.collapse::after { content: ""; border: 5px solid transparent; border-bottom-color: #222; border-top: 0; }
.dialog-actions { display: flex; justify-content: flex-end; gap: 5px; padding: 8px 15px 0; }
.dialog-actions button { width: 54px; height: 26px; color: #005f87; background: #fff; border: 1px solid #005f87; }
.dialog-actions .primary { color: #fff; background: #005f87; }

.callout { position: absolute; z-index: 10; left: 0; top: 0; width: 300px; height: 400px; stroke: none; pointer-events: none; }
```
